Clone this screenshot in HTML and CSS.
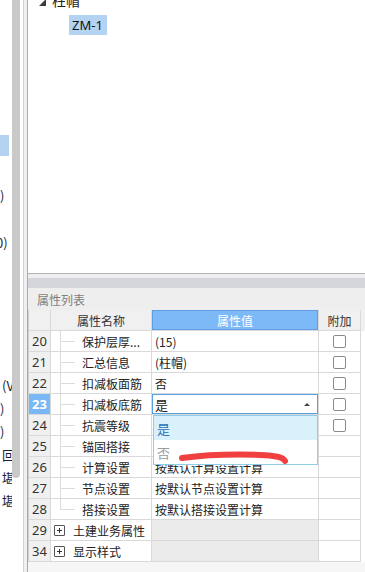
FILE: index.html
```html
<!DOCTYPE html>
<html lang="zh-CN">
<head>
    <meta charset="UTF-8">
    <meta name="viewport" content="width=device-width, initial-scale=1.0">
    <title>属性列表</title>
    <link rel="stylesheet" href="styles.css">
</head>
<body>
    <div class="app">
        <div class="side">
            <div class="hl"></div>
            <div class="frag f1">)</div>
            <div class="frag f2">0)</div>
            <div class="frag f3">(V</div>
            <div class="frag">)</div>
            <div class="frag">)</div>
            <div class="frag pad">回</div>
            <div class="frag pad">堪</div>
            <div class="frag pad">堪</div>
        </div>
        <div class="scroll"><div class="thumb"></div></div>
        <div class="split"></div>

        <div class="main">
            <div class="tree">
                <div class="node root">
                    <svg class="caret" width="7" height="7" viewBox="0 0 7 7"><polygon points="7,0 7,7 0,7" fill="#3c3c3c"/></svg>
                    <span>柱帽</span>
                </div>
                <div class="node leaf"><span class="sel">ZM-1</span></div>
            </div>
            <div class="sash"></div>
            <div class="panel-title">属性列表</div>

            <div class="sheet">
                <div class="c h"></div>
                <div class="c h">属性名称</div>
                <div class="c h val">属性值</div>
                <div class="c h">附加</div>
                <div class="c h fill"></div>

                <div class="c n">20</div>
                <div class="c nm">保护层厚...</div>
                <div class="c v">(15)</div>
                <div class="c x"><span class="box"></span></div>
                <div class="c fill"></div>

                <div class="c n">21</div>
                <div class="c nm">汇总信息</div>
                <div class="c v">(柱帽)</div>
                <div class="c x"><span class="box"></span></div>
                <div class="c fill"></div>

                <div class="c n">22</div>
                <div class="c nm">扣减板面筋</div>
                <div class="c v">否</div>
                <div class="c x"><span class="box"></span></div>
                <div class="c fill"></div>

                <div class="c n cur">23</div>
                <div class="c nm">扣减板底筋</div>
                <div class="c v edit"><span>是</span><span class="arrow"></span></div>
                <div class="c x"><span class="box"></span></div>
                <div class="c fill"></div>

                <div class="c n">24</div>
                <div class="c nm">抗震等级</div>
                <div class="c v"></div>
                <div class="c x"><span class="box"></span></div>
                <div class="c fill"></div>

                <div class="c n">25</div>
                <div class="c nm">锚固搭接</div>
                <div class="c v"></div>
                <div class="c x"></div>
                <div class="c fill"></div>

                <div class="c n">26</div>
                <div class="c nm">计算设置</div>
                <div class="c v">按默认计算设置计算</div>
                <div class="c x"></div>
                <div class="c fill"></div>

                <div class="c n">27</div>
                <div class="c nm">节点设置</div>
                <div class="c v">按默认节点设置计算</div>
                <div class="c x"></div>
                <div class="c fill"></div>

                <div class="c n">28</div>
                <div class="c nm last">搭接设置</div>
                <div class="c v">按默认搭接设置计算</div>
                <div class="c x"></div>
                <div class="c fill"></div>

                <div class="c n">29</div>
                <div class="c grp"><span class="plus"></span>土建业务属性</div>
                <div class="c v gray"></div>
                <div class="c x"></div>
                <div class="c fill"></div>

                <div class="c n">34</div>
                <div class="c grp"><span class="plus"></span>显示样式</div>
                <div class="c v gray"></div>
                <div class="c x"></div>
                <div class="c fill"></div>

                <div class="dropdown">
                    <div class="opt on">是</div>
                    <div class="opt off">否</div>
                </div>
                <svg class="scribble" width="120" height="24" viewBox="0 0 120 24">
                    <path d="M7 13 C 30 10, 60 9, 85 10 C 100 10.5, 108 12, 110 16" fill="none" stroke="#f04040" stroke-width="6" stroke-linecap="round"/>
                </svg>
            </div>
            <div class="rest"></div>
        </div>
    </div>
</body>
</html>
```

FILE: styles.css
```css
body {
    margin: 0;
    width: 365px;
    height: 572px;
    overflow: hidden;
    font-family: "Noto Sans CJK SC", "Noto Sans", sans-serif;
    font-size: 12px;
    color: #222;
    background: #fff;
}

.app {
    display: flex;
    height: 572px;
}

/* left panel, mostly scrolled out of view */
.side {
    width: 12px;
    flex: none;
    overflow: hidden;
    display: flex;
    flex-direction: column;
}

.hl {
    width: 9px;
    height: 21px;
    margin-top: 135px;
    background: #b4d2f0;
}

.frag {
    height: 23px;
    line-height: 23px;
    font-size: 13px;
    white-space: nowrap;
    color: #1e1e3c;
}

.f1 { margin-top: 28px; }
.f2 { margin-top: 24px; margin-left: -4px; }
.f3 { margin-top: 120px; padding-left: 2px; }
.pad { padding-left: 2px; }

.scroll {
    width: 8px;
    flex: none;
    margin-right: 3px;
}

.thumb {
    height: 478px;
    background: #c9c9c9;
    border-radius: 0 0 4px 4px;
}

.split {
    width: 3px;
    flex: none;
    background: #f0f0f0;
    border-left: 1px solid #d2d2d2;
    border-right: 1px solid #a9a9a9;
}

.main {
    flex: 1;
    min-width: 0;
    display: flex;
    flex-direction: column;
}

/* component tree */
.tree {
    height: 273px;
    flex: none;
    overflow: hidden;
    border-bottom: 1px solid #b4b4b4;
}

.node {
    display: flex;
    align-items: center;
}

.root {
    height: 22px;
    margin-top: -11px;
    padding-left: 11px;
    gap: 6px;
    font-size: 14px;
}

.root .caret {
    margin-top: 4px;
}

.leaf {
    height: 20px;
    margin-top: 4px;
    padding-left: 41px;
}

.sel {
    height: 20px;
    line-height: 20px;
    padding: 0 4px 0 3px;
    background: #b4d2f1;
    font-family: "Noto Sans", sans-serif;
    font-size: 13px;
    color: #111;
}

.sash {
    height: 4px;
    flex: none;
    background: #eeeeee;
    border-bottom: 10px solid #d3d5da;
}

.panel-title {
    height: 22px;
    flex: none;
    display: flex;
    align-items: center;
    padding-left: 9px;
    background: #eeeeee;
    color: #7f7f7f;
}

/* property grid */
.sheet {
    position: relative;
    flex: none;
    display: grid;
    grid-template-columns: 22px 101px 167px 42px 1fr;
    grid-auto-rows: 21px;
    border-left: 1px solid #cfcfcf;
}

.c {
    box-sizing: border-box;
    display: flex;
    align-items: center;
    overflow: hidden;
    white-space: nowrap;
    border-right: 1px solid #d9d9d9;
    border-bottom: 1px solid #d9d9d9;
    background: #fff;
}

.c.fill {
    border: none;
}

.h {
    justify-content: center;
    background: #f0f0f0;
    color: #333;
}

.h.fill {
    background: #f0f0f0;
}

.h.val {
    background: #7db9f6;
    color: #fff;
    box-shadow: inset 0 0 0 1px #5d9fe2;
}

.n {
    justify-content: center;
    background: #f0f0f0;
    font-family: "Noto Sans", sans-serif;
    font-size: 13px;
    color: #333;
}

.n.cur {
    background: #7ab8f5;
    color: #fff;
    font-weight: bold;
}

.nm {
    padding-left: 31px;
    background:
        linear-gradient(#dcdcdc, #dcdcdc) no-repeat 9px 0 / 1px 100%,
        linear-gradient(#dcdcdc, #dcdcdc) no-repeat 9px 10px / 15px 1px,
        #fff;
}

.nm.last {
    background:
        linear-gradient(#dcdcdc, #dcdcdc) no-repeat 9px 0 / 1px 11px,
        linear-gradient(#dcdcdc, #dcdcdc) no-repeat 9px 10px / 15px 1px,
        #fff;
}

.grp {
    padding-left: 3px;
    gap: 8px;
}

.plus {
    width: 9px;
    height: 9px;
    flex: none;
    border: 1px solid #555;
    border-radius: 1px;
    background:
        linear-gradient(#333, #333) no-repeat center / 5px 1px,
        linear-gradient(#333, #333) no-repeat center / 1px 5px;
}

.v {
    padding-left: 3px;
}

.v.edit {
    justify-content: space-between;
    padding-right: 8px;
    box-shadow: inset 0 0 0 1px #5b9fe3;
}

.v.edit span:first-child {
    font-size: 13px;
}

.arrow {
    width: 0;
    height: 0;
    border-left: 3px solid transparent;
    border-right: 3px solid transparent;
    border-bottom: 3px solid #444;
}

.v.gray {
    background: #ebebeb;
}

.x {
    justify-content: center;
}

.box {
    width: 11px;
    height: 11px;
    border: 1px solid #8a8a8a;
    border-radius: 2px;
    background: #fff;
}

/* open combo list */
.dropdown {
    position: absolute;
    left: 124px;
    top: 105px;
    width: 165px;
    height: 50px;
    box-sizing: border-box;
    border: 1px solid #8fcde8;
    background: #fff;
}

.opt {
    height: 24px;
    display: flex;
    align-items: center;
    padding-left: 3px;
    font-size: 13px;
}

.opt.on {
    background: #d9f1fb;
    color: #2c6fb7;
}

.opt.off {
    color: #9a9a9a;
}

.scribble {
    position: absolute;
    left: 146px;
    top: 135px;
}

.rest {
    flex: 1;
    background: #f6f6f6;
}
```
